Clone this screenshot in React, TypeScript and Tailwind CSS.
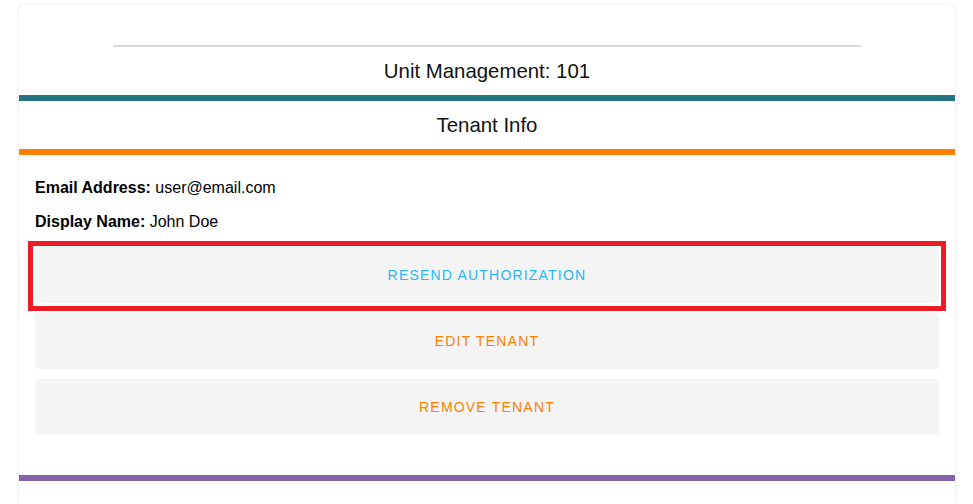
import React from "react";

const font = { fontFamily: '"Liberation Sans", Arial, sans-serif' };

function ActionButton({ label, color, highlighted }: { label: string; color: string; highlighted?: boolean }) {
  return (
    <div className="relative">
      <button
        className={`w-full h-[56px] rounded-[4px] bg-[#f4f4f4] text-[14px] uppercase tracking-[1.2px] ${color}`}
      >
        {label}
      </button>
      {highlighted && (
        <div className="absolute left-[-7px] right-[-7px] top-[-6px] bottom-[-8px] border-[5px] border-[#ed1c24] pointer-events-none" />
      )}
    </div>
  );
}

export default function App() {
  return (
    <div className="min-h-[504px] bg-white pt-[5px] pl-[19px] pr-[18px]" style={font}>
      <div className="min-h-[499px] bg-white rounded-t-[5px] shadow-[0_0_3px_rgba(0,0,0,0.14)] flex flex-col">
        <div className="pt-[40px]">
          <div className="mx-auto w-4/5 h-[2px] bg-[#d9d9d9]" />
        </div>
        <div className="h-[48px] flex items-center justify-center text-[20.4px] text-[#111]">
          Unit Management: 101
        </div>
        <div className="h-[6px] bg-[#267585]" />
        <div className="h-[48px] flex items-center justify-center text-[20.4px] text-[#111]">
          Tenant Info
        </div>
        <div className="h-[6px] bg-[#ff7f00]" />
        <div className="px-4 pt-[24px] pb-[40px] text-[16px] text-black">
          <p className="leading-[18px]">
            <span className="font-bold">Email Address:</span> user@email.com
          </p>
          <p className="leading-[18px] mt-[16px]">
            <span className="font-bold">Display Name:</span> John Doe
          </p>
          <div className="mt-[16px] flex flex-col gap-[10px]">
            <ActionButton label="Resend Authorization" color="text-[#29b6f6]" highlighted />
            <ActionButton label="Edit Tenant" color="text-[#ff8000]" />
            <ActionButton label="Remove Tenant" color="text-[#ff8000]" />
          </div>
        </div>
        <div className="h-[6px] bg-[#8462a8]" />
        <div className="flex-1" />
      </div>
    </div>
  );
}
